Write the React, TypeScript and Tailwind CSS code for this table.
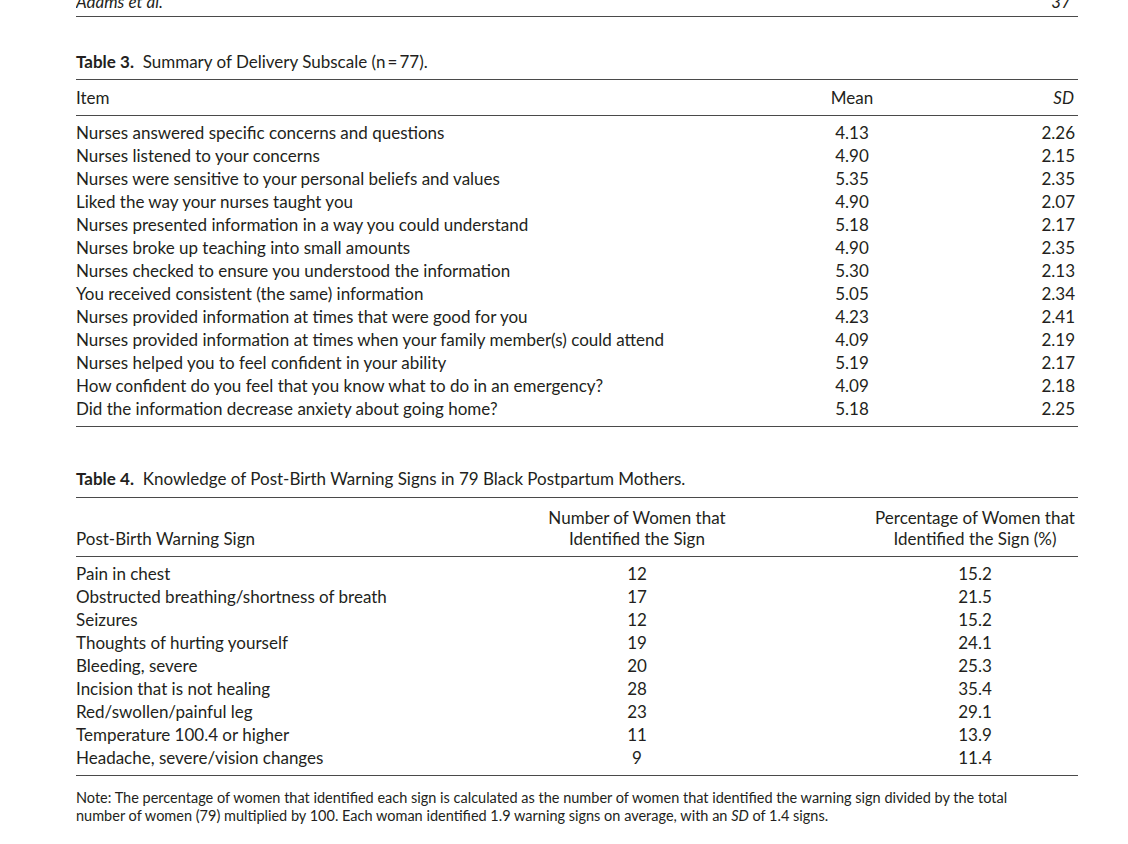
const delivery = [
  ["Nurses answered specific concerns and questions", "4.13", "2.26"],
  ["Nurses listened to your concerns", "4.90", "2.15"],
  ["Nurses were sensitive to your personal beliefs and values", "5.35", "2.35"],
  ["Liked the way your nurses taught you", "4.90", "2.07"],
  ["Nurses presented information in a way you could understand", "5.18", "2.17"],
  ["Nurses broke up teaching into small amounts", "4.90", "2.35"],
  ["Nurses checked to ensure you understood the information", "5.30", "2.13"],
  ["You received consistent (the same) information", "5.05", "2.34"],
  ["Nurses provided information at times that were good for you", "4.23", "2.41"],
  ["Nurses provided information at times when your family member(s) could attend", "4.09", "2.19"],
  ["Nurses helped you to feel confident in your ability", "5.19", "2.17"],
  ["How confident do you feel that you know what to do in an emergency?", "4.09", "2.18"],
  ["Did the information decrease anxiety about going home?", "5.18", "2.25"],
];

const warningSigns = [
  ["Pain in chest", "12", "15.2"],
  ["Obstructed breathing/shortness of breath", "17", "21.5"],
  ["Seizures", "12", "15.2"],
  ["Thoughts of hurting yourself", "19", "24.1"],
  ["Bleeding, severe", "20", "25.3"],
  ["Incision that is not healing", "28", "35.4"],
  ["Red/swollen/painful leg", "23", "29.1"],
  ["Temperature 100.4 or higher", "11", "13.9"],
  ["Headache, severe/vision changes", "9", "11.4"],
];

const Rule = () => <div className="h-px bg-[#4a4a4a]" />;

export default function App() {
  return (
    <div className="min-h-[844px] w-[1128px] bg-white text-[#231f20] font-['Lato','Liberation_Sans',sans-serif]">
      <div className="ml-[76px] w-[1002px]">
        {/* running head */}
        <div className="h-4 overflow-hidden">
          <div className="-mt-[8px] flex justify-between whitespace-nowrap pr-[7px] text-[17px] italic leading-5">
            <span>Adams et al.</span>
            <span>37</span>
          </div>
        </div>
        <Rule />

        {/* Table 3 */}
        <p className="mt-[35px] mb-[7px] text-[17px] leading-5">
          <span className="font-bold">Table 3.</span>&nbsp; Summary of Delivery Subscale (n&thinsp;=&thinsp;77).
        </p>
        <Rule />
        <div className="grid grid-cols-[716px_120px_166px] py-[6px] text-[17px] leading-[23px]">
          <span>Item</span>
          <span className="text-center">Mean</span>
          <span className="pr-[4px] text-right italic">SD</span>
        </div>
        <Rule />
        <div className="pt-[5px] pb-[6px] text-[17px] leading-[23px]">
          {delivery.map(([item, mean, sd]) => (
            <div key={item} className="grid grid-cols-[716px_120px_166px]">
              <span>{item}</span>
              <span className="text-center">{mean}</span>
              <span className="pr-[3px] text-right">{sd}</span>
            </div>
          ))}
        </div>
        <Rule />

        {/* Table 4 */}
        <p className="mt-[42px] mb-[8px] text-[17px] leading-5">
          <span className="font-bold">Table 4.</span>&nbsp; Knowledge of Post-Birth Warning Signs in 79 Black Postpartum Mothers.
        </p>
        <Rule />
        <div className="grid grid-cols-[461px_200px_341px] items-end pt-[9px] pb-[7px] text-[17px] leading-[21px]">
          <span>Post-Birth Warning Sign</span>
          <span className="text-center">
            Number of Women that
            <br />
            Identified the Sign
          </span>
          <span className="pl-[135px] text-center">
            Percentage of Women that
            <br />
            Identified the Sign (%)
          </span>
        </div>
        <Rule />
        <div className="pt-[5px] pb-[6px] text-[17px] leading-[23px]">
          {warningSigns.map(([sign, count, pct]) => (
            <div key={sign} className="grid grid-cols-[461px_200px_341px]">
              <span>{sign}</span>
              <span className="text-center">{count}</span>
              <span className="pl-[135px] text-center">{pct}</span>
            </div>
          ))}
        </div>
        <Rule />
        <p className="mt-[13px] whitespace-nowrap text-[14.5px] leading-[18px]">
          Note: The percentage of women that identified each sign is calculated as the number of women that identified the warning sign divided by the total
          <br />
          number of women (79) multiplied by 100. Each woman identified 1.9 warning signs on average, with an <i>SD</i> of 1.4 signs.
        </p>
      </div>
    </div>
  );
}
